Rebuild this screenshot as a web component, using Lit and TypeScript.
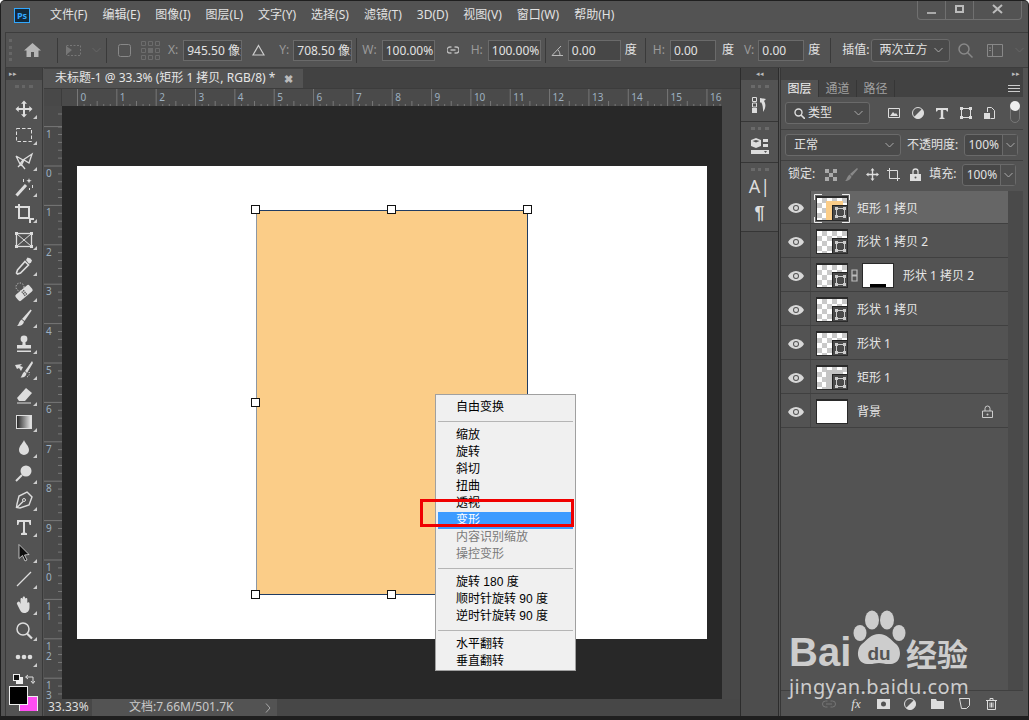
import { LitElement, html, css, svg } from "lit";
import { customElement } from "lit/decorators.js";

const ico = (w: number, h: number, body: unknown) =>
  html`<svg class="ico" width=${w} height=${h} viewBox="0 0 ${w} ${h}">${body}</svg>`;

const tools = [
  svg`<path fill="#ddd" d="M10 1.5l3 3.2h-2v4.300h4.300v-2l3.200 3-3.200 3v-2H11v4.300h2l-3 3.200-3-3.200h2V11H4.700v2l-3.200-3 3.200-3v2H9V4.700H7z"/>`,
  svg`<rect x="2.500" y="3.500" width="15" height="13" fill="none" stroke="#ddd" stroke-dasharray="3.500 2"/>`,
  svg`<path fill="none" stroke="#ddd" stroke-width="1.300" d="M2 5l7 4 9-6-3 9-5-3-3 6M2 5l4 8 3-4M4 16l3-3 4 5"/>`,
  svg`<path stroke="#ddd" stroke-width="3" d="M2.500 18.500L12 8"/><path fill="#ddd" d="M15 1l.7 2 2 .7-2 .7-.7 2-.7-2-2-.7 2-.7zM18 8h1v3h-1zM9 2h1v3H9zM15 11h1v2h-1z"/>`,
  svg`<path fill="none" stroke="#ddd" stroke-width="2" d="M1 4h4M5 1v14h11M5 4h10v12"/><path fill="#ddd" d="M15 15h2v5h-2zM17 15h3v2h-3z"/>`,
  svg`<rect x="2.500" y="3.500" width="15" height="13" fill="none" stroke="#ddd" stroke-width="1.300"/><path stroke="#ddd" d="M3 4l14 12M17 4L3 16"/><path fill="#ddd" d="M1 2h3v3H1zM16 2h3v3h-3zM1 15h3v3H1zM16 15h3v3h-3z"/>`,
  svg`<path fill="#ddd" d="M12 4l1.500-2.500 3 1 1.500 2-1 2.200-2 1z"/><path fill="none" stroke="#ddd" stroke-width="1.600" d="M11 5.500l3.500 3.500-8 8-3 1-1-1 1-3z"/>`,
  svg`<g transform="rotate(-40 10 11)"><rect x="1" y="7" width="18" height="8" rx="2" fill="#ddd"/><path fill="#555" d="M8.500 8.500h1.400v1.400H8.500zM10.500 8.500h1.400v1.400h-1.400zM8.500 10.500h1.400v1.400H8.500zM10.500 10.500h1.400v1.400h-1.400zM8.500 12.500h1.400v1.400H8.500zM10.500 12.500h1.400v1.400h-1.400z"/></g><circle cx="6" cy="5" r="4" fill="none" stroke="#ddd" stroke-dasharray="1 1.600"/>`,
  svg`<path fill="#ddd" d="M16.500 1.500l1.200 1L10.500 13 8 11z"/><path fill="#ddd" d="M7.500 11.500l2.500 2.200c-.5 3-3.500 4.600-7 4.300 1.800-1.200 1.400-3.600 4.500-6.500z"/>`,
  svg`<circle cx="10" cy="5" r="3.400" fill="#ddd"/><path fill="#ddd" d="M8.800 7h2.400l.5 4H8.300zM3 11h14v3.500H3zM3 16.500h14V18H3z"/>`,
  svg`<path fill="#ddd" d="M18 1L11 11l2 2 6-10z"/><path fill="#ddd" d="M10.500 11.500l2 2c-.5 3-3 4.500-6 4 1.500-1 1-3 4-6zM1 5l7-1-2 2 3 1-2 4-2-3-2 1z"/><path stroke="#ddd" stroke-dasharray="1 1.500" fill="none" d="M15 12c1 2 0 4-2 5"/>`,
  svg`<path fill="#ddd" d="M12 2l6 5-7 8H5l-2-3z"/><path fill="none" stroke="#ddd" d="M3 17h14"/>`,
  svg`<defs><linearGradient id="gr"><stop offset="0" stop-color="#222"/><stop offset="1" stop-color="#eee"/></linearGradient></defs><rect x="2.500" y="3.500" width="15" height="13" fill="url(#gr)" stroke="#ddd"/>`,
  svg`<path fill="#ddd" d="M10 2c1 3 5 6 5 10a5 5 0 0 1-10 0c0-4 4-7 5-10z"/>`,
  svg`<circle cx="12" cy="7" r="5.500" fill="#ddd"/><path stroke="#ddd" stroke-width="2" d="M8 11l-6 6"/>`,
  svg`<path fill="none" stroke="#ddd" stroke-width="1.400" d="M13 2l5 5-3 8-9 3-3.500-.5L3 14l2-8zM3 17.500l6-6"/><circle cx="10" cy="10" r="1.500" fill="none" stroke="#ddd"/>`,
  svg`<path fill="#ddd" d="M3 3h14v5h-1.300l-1-3H11v10.500l2 .7V18H7v-1.800l2-.7V5H5.300l-1 3H3z"/>`,
  svg`<path fill="#0d0d0d" stroke="#ddd" stroke-width=".8" d="M5 1.500v14l3.500-3 2.500 5.500 2-1-2.500-5 4.500-.5z"/>`,
  svg`<path stroke="#ddd" stroke-width="1.200" d="M3 17L17 3"/>`,
  svg`<path fill="#ddd" d="M4 7c1-1 2 0 2.500 2V4c0-1.500 2-1.500 2.200 0V2.500c0-1.500 2.300-1.500 2.300 0V4c.2-1.400 2.300-1.400 2.300 0v4c.3-1 2.200-1 2.200.5v4c0 3-2 5.500-5 5.500H10c-2 0-3-1-4-3L3 9c-.5-1 .3-2 1-2z"/>`,
  svg`<circle cx="9" cy="8" r="6" fill="none" stroke="#ddd" stroke-width="1.500"/><path stroke="#ddd" stroke-width="2.200" d="M13 12.500l5 5"/>`,
  svg`<circle cx="4" cy="10" r="2.300" fill="#ddd"/><circle cx="10" cy="10" r="2.300" fill="#ddd"/><circle cx="16" cy="10" r="2.300" fill="#ddd"/>`,
];

const menus = ["文件(F)", "编辑(E)", "图像(I)", "图层(L)", "文字(Y)", "选择(S)", "滤镜(T)", "3D(D)", "视图(V)", "窗口(W)", "帮助(H)"];

type Item = string | { t: string; off?: boolean; on?: boolean } | null;
const menuItems: Item[] = [
  "自由变换", null, "缩放", "旋转", "斜切", "扭曲", "透视",
  { t: "变形", on: true }, { t: "内容识别缩放", off: true }, { t: "操控变形", off: true }, null,
  "旋转 180 度", "顺时针旋转 90 度", "逆时针旋转 90 度", null, "水平翻转", "垂直翻转",
];

const layers = [
  { name: "矩形 1 拷贝", thumb: "sel", on: true },
  { name: "形状 1 拷贝 2", thumb: "" },
  { name: "形状 1 拷贝 2", thumb: "", mask: true },
  { name: "形状 1 拷贝", thumb: "" },
  { name: "形状 1", thumb: "" },
  { name: "矩形 1", thumb: "grey" },
  { name: "背景", thumb: "white", lock: true },
];

const eye = ico(16, 10, svg`<path fill="#d8d8d8" d="M8 0c3.500 0 6.500 2.300 8 5-1.500 2.700-4.500 5-8 5S1.500 7.700 0 5c1.500-2.700 4.500-5 8-5z"/><circle cx="8" cy="5" r="3" fill="#535353"/><circle cx="8" cy="5" r="2" fill="#d8d8d8"/>`);
const chev = ico(9, 6, svg`<path fill="none" stroke="#aaa" d="M.5 1L4.500 5l4-4"/>`);
const soBadge = svg`<rect x="2.500" y="2.500" width="8" height="8" fill="none" stroke="#ccc"/><path fill="#ccc" d="M1 1h3v3H1zM9 1h3v3H9zM1 9h3v3H1zM9 9h3v3H9z"/>`;

function hRuler() {
  const s = [];
  for (let i = 0; i <= 16; i++) {
    const x = 15.500 + i * 39.340;
    s.push(svg`<path stroke="#777" d="M${x} 0v18"/><text x=${x + 3} y="12" class="rt">${i}</text>`);
    for (let k = 1; k < 6; k++) {
      const tx = x + (k * 39.340) / 6;
      if (tx < 660) s.push(svg`<path stroke="#777" d="M${tx} ${k === 3 ? 12 : 15}V18"/>`);
    }
  }
  return html`<svg class="block" width="660" height="18">${s}</svg>`;
}

function vRuler() {
  const s = [];
  for (let i = -1; i <= 13; i++) {
    const y = 60 + i * 39.400;
    s.push(svg`<path stroke="#777" d="M0 ${y}h18"/>`);
    const label = String(Math.abs(i));
    s.push(svg`<text y=${y + 11} class="rt">${[...label].map((c, n) => svg`<tspan x="2" dy=${n ? 10 : 0}>${c}</tspan>`)}</text>`);
    for (let k = 1; k < 5; k++) {
      const ty = y + (k * 39.400) / 5;
      if (ty < 593) s.push(svg`<path stroke="#777" d="M14 ${ty}h4"/>`);
    }
  }
  s.push(svg`<path stroke="#777" d="M14 8h4M14 21h4"/>`);
  return html`<svg class="block" width="18" height="593">${s}</svg>`;
}

@customElement("app-root")
export class AppRoot extends LitElement {
  static styles = css`
    :host {
      display: block;
      width: 1029px;
      height: 720px;
      background: #fff;
      font: 12px/1.2 "Noto Sans", "Noto Sans CJK SC", sans-serif;
      color: #e2e2e2;
    }
    .block { display: block; }
    .ico { display: block; flex: none; }
    .rt { font: 10px "Noto Sans", sans-serif; fill: #9db0c0; }
    .window {
      position: relative;
      width: 1029px;
      height: 720px;
      box-sizing: border-box;
      background: #535353;
      border: 1px solid #1f1f1f;
      border-bottom-width: 4px;
      border-radius: 5px 5px 0 0;
      overflow: hidden;
      display: flex;
      flex-direction: column;
    }
    /* menu bar */
    .menubar {
      height: 31px;
      flex: none;
      display: flex;
      align-items: center;
      padding-left: 13px;
      position: relative;
    }
    .logo {
      width: 14px;
      height: 13px;
      border: 1px solid #31a8ff;
      background: #132a3c;
      color: #31a8ff;
      font-size: 9px;
      font-weight: 700;
      line-height: 13px;
      text-align: center;
      margin: -3px 20px 0 0;
    }
    .menus { display: flex; gap: 15px; margin-top: -2px; }
    .winctl {
      position: absolute;
      right: 6px;
      top: -1px;
      height: 19px;
      display: flex;
      border: 1px solid #707070;
      border-top: none;
      border-radius: 0 0 4px 4px;
    }
    .winctl div {
      display: flex;
      align-items: center;
      justify-content: center;
      height: 19px;
      width: 27px;
      border-left: 1px solid #707070;
    }
    .winctl div:first-child { border-left: none; }
    .winctl div:last-child { width: 47px; }
    /* options bar */
    .options {
      height: 36px;
      flex: none;
      margin-left: 4px;
      box-sizing: border-box;
      border-top: 1px solid #3d3d3d;
      border-left: 1px solid #3d3d3d;
      border-bottom: 1px solid #3d3d3d;
      display: flex;
      align-items: center;
      color: #e2e2e2;
    }
    .options span, .prow span { white-space: nowrap; flex: none; }
    .grip { width: 3px; height: 22px; margin-left: 3px; flex: none; box-sizing: border-box; border-left: 3px dotted #666; }
    .sep { width: 1px; height: 25px; background: #3a3a3a; margin: 0 5px 0 0; flex: none; }
    .lbl { color: #9a9a9a; flex: none; }
    .input {
      box-sizing: border-box;
      height: 21px;
      flex: none;
      overflow: hidden;
      white-space: nowrap;
      background: #474747;
      border: 1px solid #6a6a6a;
      color: #e2e2e2;
      line-height: 19px;
      padding-left: 3px;
    }
    .w60 { width: 59px; }
    .w54 { width: 53px; }
    .w47 { width: 46px; }
    .ml1 { margin-left: 1px; }
    .ml2 { margin-left: 2px; }
    .ml4 { margin-left: 4px; }
    .ml5 { margin-left: 5px; }
    .ml6 { margin-left: 6px; }
    .ml8 { margin-left: 8px; }
    .ml10 { margin-left: 10px; }
    .ml12 { margin-left: 12px; }
    .ml14 { margin-left: 14px; }
    .ml16 { margin-left: 16px; }
    .ml18 { margin-left: 18px; }
    .select {
      box-sizing: border-box;
      display: flex;
      align-items: center;
      gap: 3px;
      flex: none;
      border: 1px solid #6a6a6a;
      border-radius: 3px;
      background: #4a4a4a;
      color: #e2e2e2;
      padding: 0 6px 0 8px;
    }
    .select > svg:last-child { margin-left: auto; }
    .interp { width: 79px; height: 23px; }
    /* main area */
    .main { flex: 1; display: flex; min-height: 0; }
    .tools {
      width: 38px;
      box-sizing: border-box;
      margin-left: 4px;
      flex: none;
      border-right: 1px solid #3a3a3a;
      border-left: 1px solid #3a3a3a;
      display: flex;
      flex-direction: column;
      align-items: center;
      position: relative;
    }
    .strip {
      align-self: stretch;
      height: 12px;
      background: #424242;
      color: #bbb;
      font-size: 7px;
      line-height: 12px;
      display: flex;
      padding: 0 3px;
      justify-content: space-between;
      flex: none;
    }
    .tgrip { width: 18px; height: 3px; flex: none; margin: 5px 0 5px; border-top: 3px dotted #666; }
    .tool {
      width: 36px;
      height: 26.100px;
      flex: none;
      display: flex;
      align-items: center;
      justify-content: center;
      position: relative;
    }
    .tool::after {
      content: "";
      position: absolute;
      right: 5px;
      bottom: 3px;
      border: 2px solid transparent;
      border-right-color: #ccc;
      border-bottom-color: #ccc;
    }
    .swap { align-self: stretch; display: flex; justify-content: space-between; padding: 4px 7px 0 7px; flex: none; }
    .colors { width: 30px; height: 26px; margin: 2px 0 0 3px; position: relative; flex: none; align-self: flex-start; }
    .fg {
      position: absolute; left: 0; top: 0; z-index: 1;
      box-sizing: border-box; width: 19px; height: 19px;
      background: #000; border: 1px solid #eee;
    }
    .bg {
      position: absolute; left: 10px; top: 10px;
      box-sizing: border-box; width: 19px; height: 15px;
      background: #ff4df2; border: 1px solid #eee; border-bottom: none;
    }
    /* document */
    .doc {
      width: 697px;
      box-sizing: border-box;
      margin-left: 1px;
      flex: none;
      display: flex;
      flex-direction: column;
      border-right: 1px solid #2c2c2c;
      background: #484848;
    }
    .tabbar { height: 20px; flex: none; background: #424242; display: flex; }
    .tab {
      width: 259px;
      background: #535353;
      color: #e6e6e6;
      display: flex;
      align-items: center;
      padding-left: 11px;
      box-sizing: border-box;
      white-space: nowrap;
      margin-top: 1px;
    }
    .tab .x { margin-left: 9px; color: #bbb; font-size: 11px; font-weight: 700; }
    .rulerrow { display: flex; height: 18px; flex: none; border-top: 1px solid #3c3c3c; box-sizing: border-box; }
    .corner { width: 17px; flex: none; border-right: 1px solid #3c3c3c; }
    .hruler { width: 660px; background: #4a4a4a; flex: none; }
    .docbody { display: flex; flex: 1; min-height: 0; }
    .vruler { width: 18px; flex: none; background: #4a4a4a; overflow: hidden; }
    .paste { width: 660px; flex: none; background: #282828; position: relative; }
    .status { height: 17px; flex: none; display: flex; align-items: center; background: #474747; }
    .zoomf { width: 48px; color: #ddd; padding-left: 4px; box-sizing: border-box; flex: none; }
    .docinfo {
      width: 185px;
      flex: none;
      height: 17px;
      background: #535353;
      display: flex;
      align-items: center;
      justify-content: space-between;
      box-sizing: border-box;
      padding: 0 6px 0 37px;
      color: #c8c8c8;
    }
    /* free canvas */
    .artboard { position: absolute; left: 15px; top: 60px; width: 630px; height: 473px; background: #fff; }
    .shape {
      position: absolute; left: 194px; top: 104px; width: 272px; height: 385px;
      box-sizing: border-box;
      background: #fbcd88;
      border: 1px solid #1f3c63;
      border-left-color: #8d97a3;
    }
    .h {
      position: absolute; width: 9px; height: 9px; box-sizing: border-box;
      background: #fff; border: 1px solid #111;
    }
    /* right dock */
    .dock {
      width: 38px;
      box-sizing: border-box;
      flex: none;
      display: flex;
      flex-direction: column;
      border-right: 1px solid #2c2c2c;
      background: #4d4d4d;
    }
    .dgroup {
      display: flex;
      flex-direction: column;
      align-items: center;
      flex: none;
      background: #535353;
      border-bottom: 1px solid #363636;
    }
    .dgrip { width: 18px; height: 3px; margin: 5px 0 6px; border-top: 3px dotted #6a6a6a; }
    .d1 { height: 41px; }
    .d2 { height: 40px; }
    .d2 .dgrip { margin-bottom: 4px; }
    .d3 { height: 68px; }
    .amark { font: 18px/22px "Noto Sans", sans-serif; color: #ddd; margin-top: -5px; }
    .pilcrow { font: 700 18px/24px "Liberation Sans", sans-serif; color: #ddd; margin-top: 4px; }
    /* layers panel */
    .panel {
      flex: 1;
      margin-left: 1px;
      margin-right: 5px;
      display: flex;
      flex-direction: column;
      min-width: 0;
      border-left: 1px solid #363636;
    }
    .pstrip { height: 12px; flex: none; background: #424242; color: #bbb; font-size: 7px; line-height: 12px; text-align: right; padding-right: 3px; }
    .ptabs { height: 17px; flex: none; display: flex; background: #424242; align-items: stretch; }
    .ptab { width: 38px; text-align: center; color: #a0a0a0; line-height: 17px; border-right: 1px solid #363636; box-sizing: border-box; white-space: nowrap; }
    .ptab.active { background: #535353; color: #eee; }
    .pmenu { margin: 5px 3px 0 auto; }
    .prow { display: flex; align-items: center; flex: none; box-sizing: border-box; border-bottom: 1px solid #404040; }
    .r1 { height: 33px; padding-left: 4px; }
    .r2 { height: 31px; padding-left: 4px; }
    .r3 { height: 30px; padding-left: 7px; padding-bottom: 3px; border-bottom: none; }
    .filter { width: 85px; height: 22px; }
    .blend { width: 116px; height: 22px; }
    .spin { display: flex; height: 22px; box-sizing: border-box; border: 1px solid #6a6a6a; border-radius: 3px; flex: none; width: 54px; background: #474747; }
    .spin span { width: 37px; text-align: center; line-height: 20px; border-right: 1px solid #6a6a6a; }
    .spin i { flex: 1; display: flex; align-items: center; justify-content: center; background: #4e4e4e; }
    .toggle { width: 8px; height: 17px; margin-left: 15px; border: 1px solid #777; border-radius: 5px; position: relative; flex: none; }
    .toggle::before { content: ""; position: absolute; left: -1px; top: -4px; width: 10px; height: 10px; border-radius: 50%; background: #eee; }
    .checker { width: 12px; height: 12px; background: repeating-conic-gradient(#555 0 25%, #aaa 0 50%) 0 0 / 8px 8px; flex: none; }
    .layersbody { flex: 1; display: flex; min-height: 0; }
    .list { width: 227px; flex: none; }
    .lane { flex: 1; background: #4a4a4a; }
    .layer { height: 34px; display: flex; align-items: center; border-bottom: 1px solid #404040; box-sizing: border-box; }
    .layer.first { height: 33px; }
    .eyec { width: 30px; align-self: stretch; flex: none; display: flex; align-items: center; justify-content: center; border-right: 1px solid #464646; box-sizing: border-box; padding-top: 2px; }
    .body { flex: 1; align-self: stretch; display: flex; align-items: center; padding: 2px 0 0 5px; min-width: 0; box-sizing: border-box; }
    .layer.on .body { background: #666; }
    .thumb {
      box-sizing: border-box;
      width: 32px;
      height: 25px;
      flex: none;
      position: relative;
      border: 1px solid #2a2a2a;
      border-top-width: 2px;
      overflow: hidden;
      background: repeating-conic-gradient(#c9c9c9 0 25%, #fff 0 50%) 0 0 / 10px 10px;
    }
    .thumb.white { background: #fff; }
    .thumb .fill { position: absolute; left: 9px; top: 3px; width: 17px; height: 30px; }
    .thumb.sel .fill { background: #fbcd88; }
    .thumb.grey .fill { background: #c4c4c4; }
    .so {
      position: absolute; right: 0; bottom: 0; width: 14px; height: 14px;
      background: #4a4a4a; border-left: 1px solid #222; border-top: 1px solid #222;
      display: flex; align-items: center; justify-content: center;
    }
    .framed { position: relative; flex: none; }
    .framed svg.br { position: absolute; left: -2px; top: -2px; }
    .link { margin: 0 4px 0 3px; flex: none; }
    .mask { width: 32px; height: 25px; box-sizing: border-box; border: 1px solid #2a2a2a; background: #fff; position: relative; flex: none; }
    .mask::after { content: ""; position: absolute; left: 7px; right: 7px; bottom: 0; height: 3px; background: #000; }
    .lname { margin: 2px 0 0 9px; white-space: nowrap; color: #e6e6e6; }
    .lockic { margin-left: auto; margin-right: 15px; }
    .pfoot {
      height: 26px;
      flex: none;
      border-top: 1px solid #404040;
      display: flex;
      align-items: center;
      padding-left: 41px;
      gap: 13px;
      box-sizing: border-box;
    }
    .fi { width: 14px; flex: none; display: flex; justify-content: center; }
    .fx { font: italic 13px "Liberation Serif", serif; color: #ddd; }
    /* context menu */
    .ctx {
      position: absolute;
      left: 434px;
      top: 393px;
      width: 141px;
      height: 277px;
      box-sizing: border-box;
      background: #f0f0f0;
      border: 1px solid #a0a0a0;
      padding: 4px 2px 3px;
      font: 12px/17px "Liberation Sans", "Noto Sans CJK SC", sans-serif;
      color: #000;
      z-index: 2;
    }
    .mi { height: 17px; padding-left: 18px; white-space: nowrap; }
    .mi.on { background: #3d9bff; color: #fff; }
    .mi.off { color: #7a7a7a; }
    .ms { height: 11px; display: flex; align-items: center; }
    .ms::before { content: ""; flex: 1; height: 1px; background: #b5b5b5; }
    .red {
      position: absolute;
      left: 419px;
      top: 498px;
      width: 154px;
      height: 28px;
      box-sizing: border-box;
      border: 3px solid #f00000;
      z-index: 3;
    }
    .wm { position: absolute; left: 779px; top: 599px; z-index: 4; pointer-events: none; }
  `;

  private handles() {
    const pts = [[0, 0], [136, 0], [272, 0], [0, 193], [0, 385], [136, 385], [272, 385]];
    return pts.map(([x, y]) => html`<div class="h" style="left:${189 + x}px;top:${99 + y}px"></div>`);
  }

  private layerRow(l: (typeof layers)[number], i: number) {
    const thumb = html`<div class="thumb ${l.thumb}">
      ${l.thumb === "sel" || l.thumb === "grey" ? html`<div class="fill"></div>` : ""}
      ${l.thumb === "white" ? "" : html`<div class="so">${ico(13, 13, soBadge)}</div>`}
    </div>`;
    return html`<div class="layer ${l.on ? "on" : ""} ${i === 0 ? "first" : ""}">
      <div class="eyec">${eye}</div>
      <div class="body">
        ${l.on
          ? html`<div class="framed">${thumb}<svg class="br" width="36" height="29"><path fill="none" stroke="#eee" d="M.5 6V.5H8M28 .5h7.500V6M.5 23v5.500H8M28 28.500h7.500V23"/></svg></div>`
          : thumb}
        ${l.mask
          ? html`<div class="link">${ico(7, 13, svg`<path fill="none" stroke="#bbb" stroke-width="1.200" d="M1 1h5v5H1zM1 7h5v5H1z"/>`)}</div><div class="mask"></div>`
          : ""}
        <span class="lname">${l.name}</span>
        ${l.lock
          ? html`<span class="lockic">${ico(11, 13, svg`<path fill="none" stroke="#ccc" d="M3 6V3.500a2.500 2.500 0 0 1 5 0V6M.5 6h10v6.500H.5z"/><circle cx="5.500" cy="9.500" r="1" fill="#ccc"/>`)}</span>`
          : ""}
      </div>
    </div>`;
  }

  render() {
    return html`
      <div class="window">
        <div class="menubar">
          <div class="logo">Ps</div>
          <div class="menus">${menus.map((m) => html`<span>${m}</span>`)}</div>
          <div class="winctl">
            <div>${ico(11, 11, svg`<path fill="#aaa" d="M1 8h9v2H1z"/>`)}</div>
            <div>${ico(11, 11, svg`<path fill="none" stroke="#bbb" stroke-width="2" d="M2 2h7v6H2z"/>`)}</div>
            <div>${ico(11, 11, svg`<path stroke="#bbb" stroke-width="2" d="M1 1l9 8M10 1l-9 8"/>`)}</div>
          </div>
        </div>

        <div class="options">
          <div class="grip"></div>
          <div class="ml12">${ico(17, 14, svg`<path fill="#b5b5b5" d="M8.500 0L17 7.500h-2.500V14H10V9H7v5H2.500V7.500H0z"/>`)}</div>
          <div class="sep ml16"></div>
          <div class="ml2">${ico(17, 13, svg`<path fill="none" stroke="#777" stroke-dasharray="2 1.500" d="M1.500 1.500h14v10h-14z"/><path fill="#777" d="M1 2l6 4-6 5z"/>`)}</div>
          <div class="ml10">${ico(9, 6, svg`<path fill="none" stroke="#666" d="M.5 1L4.500 5l4-4"/>`)}</div>
          <div class="sep ml5"></div>
          <div class="ml6">${ico(13, 13, svg`<rect x=".5" y=".5" width="12" height="12" rx="2" fill="none" stroke="#888"/>`)}</div>
          <div class="ml10">${ico(19, 19, svg`<g fill="none" stroke="#6c6c6c"><path d="M.5.5h4v4h-4zM7.500.5h4v4h-4zM14.500.5h4v4h-4zM.5 7.500h4v4h-4zM14.500 7.500h4v4h-4zM.5 14.500h4v4h-4zM7.500 14.500h4v4h-4zM14.500 14.500h4v4h-4z"/></g><rect x="7" y="7" width="5" height="5" fill="#6c6c6c"/>`)}</div>
          <span class="lbl ml8">X:</span>
          <div class="input w60 ml5">945.50 像素</div>
          <div class="ml10">${ico(13, 12, svg`<path fill="none" stroke="#ccc" stroke-width="1.200" d="M6.500 1.500L12 11H1z"/>`)}</div>
          <span class="lbl ml14">Y:</span>
          <div class="input w60 ml4">708.50 像素</div>
          <div class="sep ml4"></div>
          <span class="lbl">W:</span>
          <div class="input w54 ml5">100.00%</div>
          <div class="ml12">${ico(12, 8, svg`<path fill="none" stroke="#bbb" stroke-width="1.300" d="M4.500 1H3a3 3 0 0 0 0 6h1.500M7.500 1H9a3 3 0 0 1 0 6H7.500M3.500 4h5"/>`)}</div>
          <span class="lbl ml12">H:</span>
          <div class="input w54 ml5">100.00%</div>
          <div class="sep ml4"></div>
          <div>${ico(13, 11, svg`<path fill="none" stroke="#bbb" d="M12 10.500H1L10 1M7 5c1.500 1.500 2 3.500 2 5.500"/>`)}</div>
          <div class="input w54 ml4">0.00</div>
          <span class="ml4">度</span>
          <div class="sep ml8"></div>
          <span class="lbl ml2">H:</span>
          <div class="input w47 ml5">0.00</div>
          <span class="ml6">度</span>
          <span class="lbl ml10">V:</span>
          <div class="input w47 ml4">0.00</div>
          <span class="ml4">度</span>
          <div class="sep ml10"></div>
          <span class="ml6">插值:</span>
          <div class="select interp ml1"><span>两次立方</span>${chev}</div>
          <div class="ml8">${ico(15, 15, svg`<circle cx="6" cy="6" r="5" fill="none" stroke="#888" stroke-width="1.500"/><path stroke="#888" stroke-width="1.500" d="M9.500 9.500l5 5"/>`)}</div>
          <div class="ml14">${ico(16, 13, svg`<path fill="none" stroke="#888" d="M.5.5h15v12H.5zM5.500.5v12M2 4h2M2 6.500h2"/>`)}</div>
          <div class="ml12">${ico(9, 6, svg`<path fill="none" stroke="#666" d="M.5 1L4.500 5l4-4"/>`)}</div>
        </div>

        <div class="main">
          <div class="tools">
            <div class="strip"><span>▸▸</span></div>
            <div class="tgrip"></div>
            ${tools.map((t) => html`<div class="tool">${ico(20, 20, t)}</div>`)}
            <div class="swap">
              ${ico(10, 10, svg`<rect x="3" y="3" width="7" height="7" fill="#eee"/><rect x=".5" y=".5" width="6" height="6" fill="#111" stroke="#eee"/>`)}
              ${ico(10, 10, svg`<path fill="none" stroke="#ddd" d="M1 3h7v6M6 7l2 2.500L10 7M3 1L.5 3 3 5"/>`)}
            </div>
            <div class="colors"><div class="fg"></div><div class="bg"></div></div>
          </div>

          <div class="doc">
            <div class="tabbar">
              <div class="tab">未标题-1 @ 33.3% (矩形 1 拷贝, RGB/8) * <span class="x">✖</span></div>
            </div>
            <div class="rulerrow">
              <div class="corner"></div>
              <div class="hruler">${hRuler()}</div>
            </div>
            <div class="docbody">
              <div class="vruler">${vRuler()}</div>
              <div class="paste">
                <div class="artboard"></div>
                <div class="shape"></div>
                ${this.handles()}
              </div>
            </div>
            <div class="status">
              <div class="zoomf">33.33%</div>
              <div class="docinfo">
                <span>文档:7.66M/501.7K</span>
                ${ico(6, 10, svg`<path fill="none" stroke="#aaa" d="M1 .5L5 5 1 9.500"/>`)}
              </div>
            </div>
          </div>

          <div class="dock">
            <div class="strip"><span></span><span>◂◂</span><span></span></div>
            <div class="dgroup d1">
              <div class="dgrip"></div>
              ${ico(16, 16, svg`<path fill="none" stroke="#ddd" d="M.5.5h4v4h-4zM.5 6h4v4h-4z"/><rect y="11" width="5" height="5" fill="#ddd"/><path fill="#ddd" d="M8 1l6 1-2 2c2 3 2 7-1 11 0-4 0-7-2-10L8 6z"/>`)}
            </div>
            <div class="dgroup d2">
              <div class="dgrip"></div>
              ${ico(18, 18, svg`<path fill="#ddd" d="M5 1l5 2v6l-5 2-5-2V3zM12 2h5v3h-5zM12 7h5v3h-5zM0 13h18v4H0z"/><path fill="#555" d="M13 14h3l-1.500 2zM5 3L1.500 4 5 5.500 8.500 4z"/>`)}
            </div>
            <div class="dgroup d3">
              <div class="dgrip"></div>
              <span class="amark">A|</span>
              <span class="pilcrow">¶</span>
            </div>
          </div>

          <div class="panel">
            <div class="pstrip">▸▸</div>
            <div class="ptabs">
              <div class="ptab active">图层</div>
              <div class="ptab">通道</div>
              <div class="ptab">路径</div>
              <div class="pmenu">${ico(12, 7, svg`<path stroke="#ccc" d="M0 .5h12M0 3.500h12M0 6.500h12"/>`)}</div>
            </div>
            <div class="prow r1">
              <div class="select filter">
                ${ico(11, 11, svg`<circle cx="4.500" cy="4.500" r="3.500" fill="none" stroke="#ddd" stroke-width="1.400"/><path stroke="#ddd" stroke-width="1.600" d="M7 7l4 4"/>`)}
                <span>类型</span>${chev}
              </div>
              <div class="ml18">${ico(12, 10, svg`<path fill="none" stroke="#ddd" d="M.5.5h11v9H.5z"/><path fill="#ddd" d="M2 8l3-4 2 2 1-1 2 3z"/>`)}</div>
              <div class="ml12">${ico(12, 12, svg`<circle cx="6" cy="6" r="5.500" fill="#555" stroke="#ddd"/><path fill="#ddd" d="M10 2a5.500 5.500 0 0 1-8 8z"/>`)}</div>
              <div class="ml12">${ico(12, 11, svg`<path fill="#ddd" d="M0 0h12v3.500h-1L10 2H7.200v7.500l1.300.5v1h-5v-1l1.300-.5V2H2L1 3.500H0z"/>`)}</div>
              <div class="ml12">${ico(12, 12, svg`<path fill="none" stroke="#ddd" d="M1.500 1.500h9v9h-9z"/><path fill="#ddd" d="M0 0h3v3H0zM9 0h3v3H9zM0 9h3v3H0zM9 9h3v3H9z"/>`)}</div>
              <div class="ml12">${ico(11, 12, svg`<path fill="none" stroke="#ddd" d="M3.500 5V.5h4l3 3v8h-4"/><rect y="6" width="6" height="6" fill="#ddd"/>`)}</div>
              <div class="toggle"></div>
            </div>
            <div class="prow r2">
              <div class="select blend"><span>正常</span>${chev}</div>
              <span class="ml6">不透明度:</span>
              <div class="spin ml6"><span>100%</span><i>${chev}</i></div>
            </div>
            <div class="prow r3">
              <span>锁定:</span>
              <div class="checker ml10"></div>
              <div class="ml8">${ico(13, 13, svg`<path fill="#888" d="M12 0l1 1-6 7-2-2zM4.500 6.500l2 2C6 11 3.500 13 0 13c2-1 1.500-4 4.500-6.500z"/>`)}</div>
              <div class="ml8">${ico(13, 13, svg`<path fill="#ddd" d="M6.500 0l2 2.500H7.200v3.300h3.300V4.500L13 6.500l-2.500 2V7.200H7.200v3.300h1.300l-2 2.500-2-2.500h1.300V7.200H2.500v1.300L0 6.500l2.500-2v1.300h3.300V2.500H4.500z"/>`)}</div>
              <div class="ml8">${ico(13, 13, svg`<path fill="none" stroke="#ddd" d="M2.500 2.500h8v8h-8zM0 2.500h2.500M10.500 10.500H13M2.500 0v2.500M10.500 10.500V13"/>`)}</div>
              <div class="ml10">${ico(11, 13, svg`<path fill="none" stroke="#ddd" stroke-width="1.300" d="M3 6V3.500a2.500 2.500 0 0 1 5 0V6"/><path fill="#ddd" fill-rule="evenodd" d="M0 6h11v7H0zM5.500 8.500a1 1 0 1 0 0 2 1 1 0 0 0 0-2z"/>`)}</div>
              <span class="ml8">填充:</span>
              <div class="spin ml6"><span>100%</span><i>${chev}</i></div>
            </div>
            <div class="layersbody">
              <div class="list">${layers.map((l, i) => this.layerRow(l, i))}</div>
              <div class="lane"></div>
            </div>
            <div class="pfoot">
              <div class="fi">${ico(14, 8, svg`<path fill="none" stroke="#777" d="M5.500 1H3.500a3 3 0 0 0 0 6h2M8.500 1h2a3 3 0 0 1 0 6h-2M4 4h6"/>`)}</div>
              <div class="fi"><span class="fx">fx</span></div>
              <div class="fi">${ico(13, 10, svg`<path fill="#ddd" fill-rule="evenodd" d="M0 0h13v10H0zM6.500 2.500a2.500 2.500 0 1 0 0 5 2.500 2.500 0 0 0 0-5z"/>`)}</div>
              <div class="fi">${ico(12, 12, svg`<circle cx="6" cy="6" r="5.500" fill="#555" stroke="#ddd"/><path fill="#ddd" d="M10 2a5.500 5.500 0 0 1-8 8z"/>`)}</div>
              <div class="fi">${ico(13, 10, svg`<path fill="#ddd" d="M0 0h5l1 2h7v8H0z"/>`)}</div>
              <div class="fi">${ico(11, 11, svg`<path fill="none" stroke="#ddd" d="M.5.5h10v7l-3 3h-5z"/>`)}</div>
              <div class="fi">${ico(11, 12, svg`<path fill="none" stroke="#ddd" d="M1.500 2.500h8v9h-8zM0 2.500h11M4 2.500V.5h3v2M4 4.500v5M5.500 4.500v5M7 4.500v5"/>`)}</div>
            </div>
          </div>
        </div>

        <div class="ctx">
          ${menuItems.map((it) => {
            if (it === null) return html`<div class="ms"></div>`;
            if (typeof it === "string") return html`<div class="mi">${it}</div>`;
            return html`<div class="mi ${it.on ? "on" : ""} ${it.off ? "off" : ""}">${it.t}</div>`;
          })}
        </div>
        <div class="red"></div>

        <svg class="wm" width="200" height="110">
          <g fill="#cdcdcd">
            <ellipse cx="92" cy="20" rx="7" ry="9.500"/>
            <ellipse cx="107" cy="20" rx="7" ry="9.500"/>
            <ellipse cx="80" cy="33" rx="6.500" ry="8"/>
            <ellipse cx="119" cy="33" rx="6.500" ry="8"/>
            <path d="M99 34c8 0 12 6 17 10 6 5 6 19-5 20-6 .5-8-1-12-1s-6 1.500-12 1c-11-1-11-15-5-20 5-4 9-10 17-10z"/>
            <text x="9" y="66" font-family="Liberation Sans" font-weight="700" font-size="40">Bai</text>
            <text x="126" y="66" font-family="Noto Sans CJK SC" font-weight="700" font-size="31">经验</text>
            <text x="9" y="94" font-family="Noto Sans" font-size="20" letter-spacing="0.4">jingyan.baidu.com</text>
          </g>
          <text x="99" y="60" text-anchor="middle" font-family="Liberation Sans" font-weight="700" font-size="19" fill="#535353">du</text>
        </svg>
      </div>
    `;
  }
}
